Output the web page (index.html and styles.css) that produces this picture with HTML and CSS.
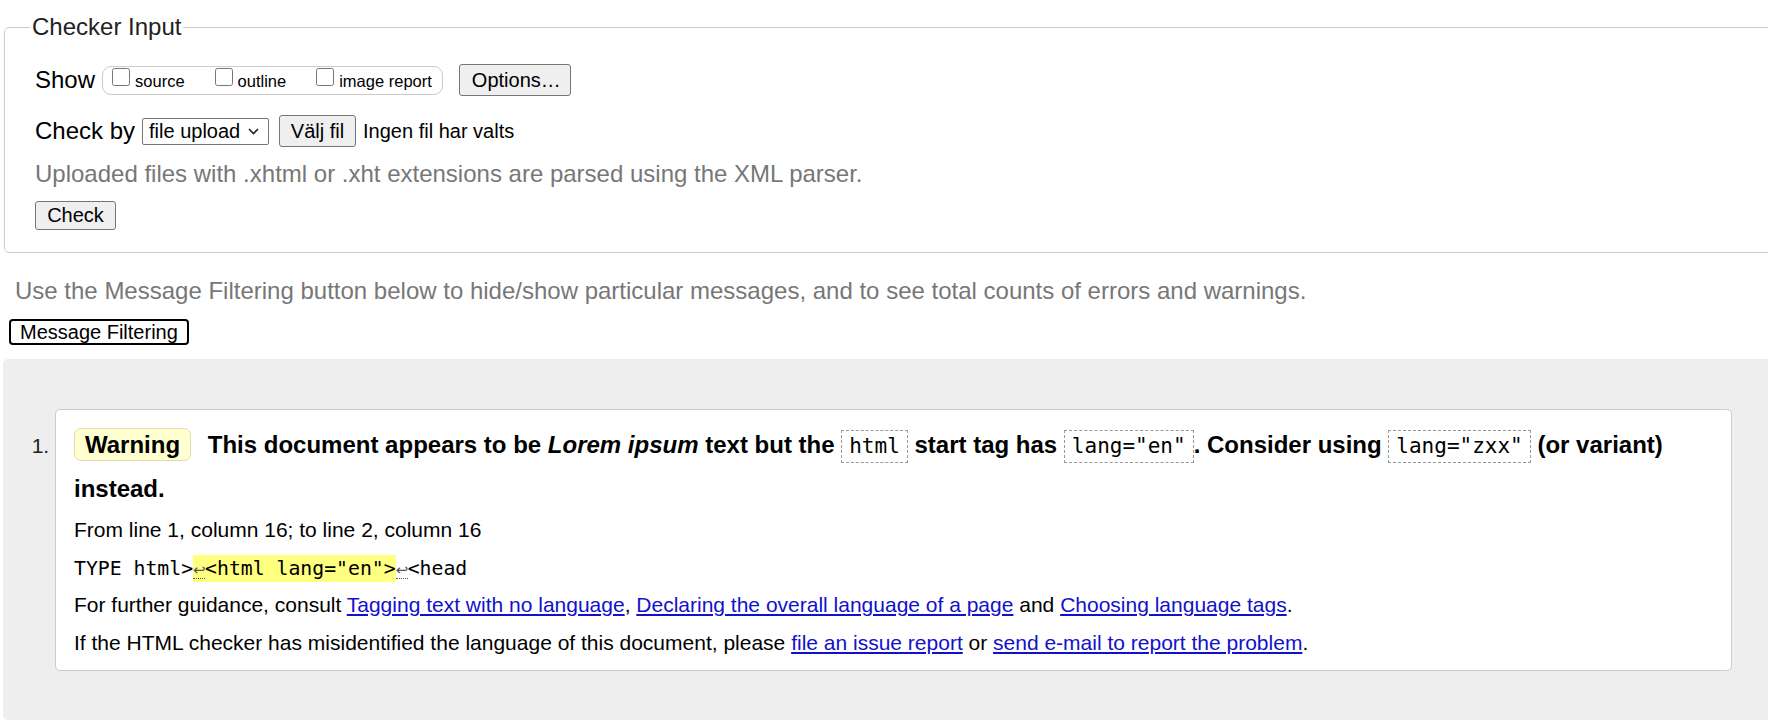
FILE: index.html
```html
<!DOCTYPE html>
<html lang="sv">
<head>
<meta charset="utf-8">
<title>Nu Html Checker</title>
<link rel="stylesheet" href="styles.css">
</head>
<body>
<form class="checker">
  <fieldset class="input">
    <legend>Checker Input</legend>
    <div class="row show-row">
      <span class="lbl">Show</span>
      <span class="opts">
        <label class="opt"><input type="checkbox"><span>source</span></label>
        <label class="opt"><input type="checkbox"><span>outline</span></label>
        <label class="opt"><input type="checkbox"><span>image report</span></label>
      </span>
      <button type="button" class="btn btn-options">Options…</button>
    </div>
    <div class="row by-row">
      <span class="lbl">Check by</span>
      <span class="select"><span class="select-text">file upload</span><svg class="chev" width="11" height="7" viewBox="0 0 11 7"><path d="M1 1l4.5 4.5L10 1" fill="none" stroke="#222" stroke-width="1.6"/></svg></span>
      <button type="button" class="btn btn-file">Välj fil</button>
      <span class="nofile">Ingen fil har valts</span>
    </div>
    <p class="hint">Uploaded files with .xhtml or .xht extensions are parsed using the XML parser.</p>
    <button type="button" class="btn btn-check">Check</button>
  </fieldset>
</form>
<p class="filter-note">Use the Message Filtering button below to hide/show particular messages, and to see total counts of errors and warnings.</p>
<button type="button" class="btn-filter">Message Filtering</button>
<div class="results">
  <ol class="msgs">
    <li class="msg">
      <p class="title"><strong class="badge">Warning</strong> <span>This document appears to be <em>Lorem ipsum</em> text but the <code class="tok">html</code> start tag has <code class="tok">lang="en"</code>. Consider using <code class="tok">lang="zxx"</code> (or variant)</span> <span>instead.</span></p>
      <p class="line">From line 1, column 16; to line 2, column 16</p>
      <p class="line extract"><code>TYPE html&gt;<mark><span class="lf">↩</span>&lt;html lang="en"&gt;</mark><span class="lf">↩</span>&lt;head</code></p>
      <p class="line">For further guidance, consult <a href="#">Tagging text with no language</a>, <a href="#">Declaring the overall language of a page</a> and <a href="#">Choosing language tags</a>.</p>
      <p class="line">If the HTML checker has misidentified the language of this document, please <a href="#">file an issue report</a> or <a href="#">send e-mail to report the problem</a>.</p>
    </li>
  </ol>
</div>
</body>
</html>
```
FILE: styles.css
```css
html {
  overflow-x: hidden;
}

body {
  margin: 0;
  font-family: "Liberation Sans", Arial, sans-serif;
  color: #000;
  background: #fff;
}

.checker {
  margin: 0;
  padding: 13px 0 0 4px;
}

.input {
  margin: 0 -40px 0 0;
  border: 1px solid #ccc;
  border-radius: 5px;
  padding: 0 30px 22px 30px;
}

.input legend {
  font-size: 24px;
  color: #222;
  padding: 0 2px;
  margin-left: -5px;
}

.row {
  display: flex;
  align-items: center;
  height: 32px;
}

.show-row {
  margin-top: 23px;
}

.by-row {
  margin-top: 19px;
}

.lbl {
  font-size: 24px;
  margin-right: 7px;
}

.opts {
  display: flex;
  align-items: center;
  height: 27px;
  border: 1px solid #ccc;
  border-radius: 9px;
  padding: 0 10px 0 9px;
  gap: 30px;
  margin-right: 16px;
}

.opt {
  display: flex;
  align-items: center;
  gap: 5px;
  font-size: 16.5px;
}

.opt input {
  width: 18px;
  height: 18px;
  margin: 0;
  position: relative;
  top: -3px;
}

.opt span {
  position: relative;
  top: 1px;
}

.btn {
  font-family: "Liberation Sans", Arial, sans-serif;
  font-size: 20px;
  color: #000;
  background: #efefef;
  border: 1px solid #767676;
  border-radius: 3px;
  padding: 0 12px;
  height: 32px;
  margin: 0;
}

.btn-options {
  width: 112px;
}

.select {
  display: inline-flex;
  align-items: center;
  justify-content: space-between;
  width: 127px;
  height: 27px;
  box-sizing: border-box;
  border: 1px solid #767676;
  border-radius: 2px;
  padding: 0 9px 0 6px;
  font-size: 20px;
  margin-right: 10px;
}

.btn-file {
  width: 77px;
  padding: 0;
  margin-right: 7px;
}

.nofile {
  font-size: 20px;
}

.hint {
  margin: 15px 0 0 0;
  font-size: 24px;
  line-height: 24px;
  color: #777;
}

.btn-check {
  margin-top: 15px;
  width: 81px;
  height: 29px;
  padding: 0;
}

.filter-note {
  margin: 24px 0 0 15px;
  font-size: 24px;
  line-height: 28px;
  color: #777;
}

.btn-filter {
  display: block;
  margin: 14px 0 0 9px;
  height: 26px;
  padding: 0 9px;
  font-family: "Liberation Sans", Arial, sans-serif;
  font-size: 20px;
  color: #000;
  background: #fff;
  border: 2px solid #000;
  border-radius: 4px;
}

.results {
  margin: 14px -40px 0 3px;
  background: #eee;
  border-radius: 5px;
  padding: 50px 0 49px 0;
}

.msgs {
  margin: 0;
  padding: 0 76px 0 52px;
  font-size: 21px;
}

.msg {
  background: #fff;
  border: 1px solid #ccc;
  border-radius: 5px;
  padding: 13px 18px 9px 18px;
}

.msg::marker {
  font-size: 21px;
  color: #222;
}

.title {
  margin: 0;
  font-size: 24px;
  line-height: 44px;
  font-weight: bold;
}

.badge {
  display: inline-block;
  background: #ffffd0;
  border: 1px solid #e0dcae;
  border-radius: 7px;
  padding: 0 10px;
  line-height: 31px;
  margin-right: 10px;
}

.tok {
  display: inline-block;
  font-family: "DejaVu Sans Mono", monospace;
  font-weight: normal;
  font-size: 21px;
  line-height: 31px;
  border: 1px dashed #999;
  padding: 0 7px;
}

.line {
  margin: 0;
  font-size: 21px;
  line-height: 37.5px;
}

.extract code {
  font-family: "DejaVu Sans Mono", monospace;
  font-size: 19.8px;
  line-height: 1;
}

.extract mark {
  background: #ffff80;
  color: #000;
  padding: 2px 0;
}

.lf {
  display: inline-block;
  width: 12px;
  font-family: "DejaVu Sans", sans-serif;
  font-size: 15px;
  line-height: 1;
  color: #555;
  border-bottom: 1px dotted #555;
  text-align: center;
}

a {
  color: #1111cc;
  text-decoration: underline;
}
```
